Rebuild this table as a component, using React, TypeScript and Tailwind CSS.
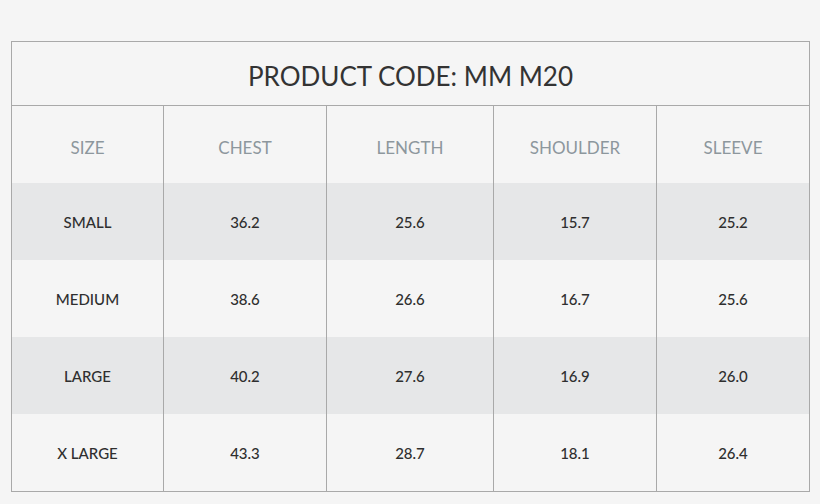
import React from 'react';

const headers = ['SIZE', 'CHEST', 'LENGTH', 'SHOULDER', 'SLEEVE'];

const rows = [
  ['SMALL', '36.2', '25.6', '15.7', '25.2'],
  ['MEDIUM', '38.6', '26.6', '16.7', '25.6'],
  ['LARGE', '40.2', '27.6', '16.9', '26.0'],
  ['X LARGE', '43.3', '28.7', '18.1', '26.4'],
];

const cols = 'grid grid-cols-[151px_163px_167px_163px_153px]';

export default function App() {
  return (
    <div
      className="min-h-[504px] w-[820px] bg-[#f5f5f5] pt-[41px] pl-[11px]"
      style={{ fontFamily: 'Lato, "Open Sans", sans-serif' }}
    >
      <div className="w-[799px] border border-[#a9a9a9]">
        {/* Title */}
        <div className="flex h-[64px] items-center justify-center border-b border-[#a9a9a9] pt-[5px] text-[26px] text-[#333]">
          PRODUCT CODE: MM M20
        </div>

        {/* Header row */}
        <div className={cols}>
          {headers.map((h, i) => (
            <div
              key={h}
              className={`flex h-[77px] items-center justify-center pt-[6px] text-[17px] text-[#8d979d] ${
                i > 0 ? 'border-l border-[#a9a9a9]' : ''
              }`}
            >
              {h}
            </div>
          ))}
        </div>

        {/* Body */}
        {rows.map((r, ri) => (
          <div key={r[0]} className={`${cols} ${ri % 2 === 0 ? 'bg-[#e6e7e8]' : 'bg-[#f5f5f5]'}`}>
            {r.map((c, i) => (
              <div
                key={i}
                className={`flex h-[77px] items-center justify-center pt-[2px] text-[15px] font-medium text-[#2f2f2f] ${
                  i > 0 ? 'border-l border-[#a9a9a9]' : ''
                }`}
              >
                {c}
              </div>
            ))}
          </div>
        ))}
      </div>
    </div>
  );
}
